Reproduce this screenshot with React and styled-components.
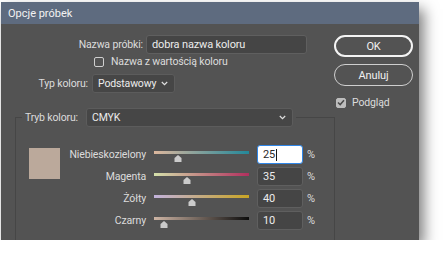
import React from "react";
import styled, { createGlobalStyle } from "styled-components";

const Global = createGlobalStyle`
  html, body { margin: 0; padding: 0; background: #ffffff; }
  body { font-family: Roboto, "Liberation Sans", sans-serif; }
`;

const Page = styled.div`
  padding: 2px 0 0 1px;
`;

const Dialog = styled.div`
  width: 418px;
  height: 238px;
  display: flex;
  flex-direction: column;
  background: #535353;
  box-shadow: 5px 7px 13px rgba(0, 0, 0, 0.5);
  overflow: hidden;
`;

const TitleBar = styled.div`
  height: 22px;
  flex: none;
  display: flex;
  align-items: center;
  padding-left: 7px;
  background: #5e6b7f;
  color: #f2f2f2;
  font-size: 11px;
`;

const Body = styled.div`
  flex: 1;
  display: grid;
  grid-template-columns: 333px 1fr;
  color: #dcdcdc;
  font-size: 10.5px;
  letter-spacing: -0.15px;
  line-height: 13px;
  overflow: hidden;
`;

const Main = styled.div`
  display: flex;
  flex-direction: column;
  padding-top: 11px;
`;

const Row = styled.div`
  display: flex;
  align-items: center;
  gap: ${(p) => p.$gap || 4}px;
  margin-top: ${(p) => p.$mt || 0}px;
  padding-left: ${(p) => p.$pl || 0}px;
`;

const Label = styled.label`
  width: ${(p) => p.$w}px;
  text-align: ${(p) => p.$align || "right"};
  white-space: nowrap;
  flex: none;
`;

const TextInput = styled.div`
  box-sizing: border-box;
  width: ${(p) => p.$w}px;
  height: 19px;
  display: flex;
  align-items: center;
  padding-left: 5px;
  background: ${(p) => (p.$focus ? "#ffffff" : "#454545")};
  border: 1px solid ${(p) => (p.$focus ? "#2f86e8" : "#5f5f5f")};
  border-radius: 3px;
  color: ${(p) => (p.$focus ? "#2a2a2a" : "#ececec")};
  font-size: 11px;
`;

const Caret = styled.span`
  display: inline-block;
  width: 1px;
  height: 12px;
  background: #1a1a1a;
  margin-left: 1px;
`;

const Check = styled.span`
  box-sizing: border-box;
  width: 10px;
  height: 10px;
  flex: none;
  border-radius: 2px;
  border: 1px solid ${(p) => (p.$checked ? "#bdbdbd" : "#cfcfcf")};
  background: ${(p) => (p.$checked ? "#bdbdbd" : "transparent")};
  display: flex;
  align-items: center;
  justify-content: center;
`;

const Select = styled.div`
  box-sizing: border-box;
  width: ${(p) => p.$w}px;
  height: 19px;
  display: flex;
  align-items: center;
  justify-content: space-between;
  padding: 0 6px 0 5px;
  background: #464646;
  border: 1px solid #5c5c5c;
  border-radius: 3px;
  color: #ececec;
  white-space: nowrap;
`;

const Chevron = () => (
  <svg width="7" height="5" viewBox="0 0 7 5">
    <path d="M0.8 1 L3.5 3.7 L6.2 1" fill="none" stroke="#e0e0e0" strokeWidth="1.2" />
  </svg>
);

const Group = styled.div`
  margin: 24px 0 0 14px;
  width: 320px;
  box-sizing: border-box;
  border: 1px solid #464646;
  border-bottom: none;
  flex: 1;
  display: flex;
  flex-direction: column;
`;

const Legend = styled.div`
  align-self: flex-start;
  display: flex;
  align-items: center;
  gap: 5px;
  margin: -10px 0 0 6px;
  padding: 0 3px;
  background: #535353;
`;

const GroupContent = styled.div`
  display: flex;
  align-items: flex-start;
  padding-top: 18px;
`;

const Swatch = styled.div`
  width: 31px;
  height: 31px;
  flex: none;
  margin: 3px 0 0 13px;
  background: ${(p) => p.$color};
`;

const Sliders = styled.div`
  display: grid;
  grid-template-columns: 86px 95px 46px auto;
  column-gap: 8px;
  row-gap: 3px;
  align-items: center;
`;

const SliderLabel = styled.span`
  text-align: right;
  white-space: nowrap;
`;

const Slider = styled.div`
  position: relative;
  height: 19px;
`;

const Track = styled.div`
  position: absolute;
  left: 0;
  right: 0;
  top: 6px;
  height: 3px;
  background: linear-gradient(to right, ${(p) => p.$from}, ${(p) => p.$to});
`;

const Thumb = styled.svg`
  position: absolute;
  top: 10px;
  margin-left: -4px;
`;

const Percent = styled.span`
  margin-left: -4px;
  color: #dcdcdc;
  font-size: 11px;
`;

const Side = styled.div`
  display: flex;
  flex-direction: column;
  align-items: flex-start;
  padding-top: 11px;
`;

const Button = styled.div`
  box-sizing: border-box;
  width: 79px;
  height: 22px;
  display: flex;
  align-items: center;
  justify-content: center;
  border-radius: 11px;
  border: ${(p) => (p.$primary ? "2px solid #f4f4f4" : "1px solid #cfcfcf")};
  color: #f0f0f0;
  font-size: 11px;
  margin-bottom: 7px;
`;

const Preview = styled.div`
  display: flex;
  align-items: center;
  gap: 6px;
  margin: 3px 0 0 2px;
`;

const channels = [
  { name: "Niebieskozielony", value: 25, from: "#dcb79d", to: "#23889a", focus: true },
  { name: "Magenta", value: 35, from: "#d4e0aa", to: "#b12f5e" },
  { name: "Żółty", value: 40, from: "#c2b2dc", to: "#c9a524" },
  { name: "Czarny", value: 10, from: "#cdb4a4", to: "#0c0c0c" },
];

export default function App() {
  return (
    <>
      <Global />
      <Page>
        <Dialog>
          <TitleBar>Opcje próbek</TitleBar>
          <Body>
            <Main>
              <Row $gap={3}>
                <Label $w={142}>Nazwa próbki:</Label>
                <TextInput $w={161}>dobra nazwa koloru</TextInput>
              </Row>
              <Row $mt={1} $pl={93} $gap={7}>
                <Check />
                <span>Nazwa z wartością koloru</span>
              </Row>
              <Row $mt={6} $gap={4}>
                <Label $w={87}>Typ koloru:</Label>
                <Select $w={83}>
                  Podstawowy
                  <Chevron />
                </Select>
              </Row>
              <Group>
                <Legend>
                  <Label $w={56} $align="left">Tryb koloru:</Label>
                  <Select $w={207}>
                    CMYK
                    <Chevron />
                  </Select>
                </Legend>
                <GroupContent>
                  <Swatch $color="#bba99b" />
                  <Sliders>
                    {channels.map((c) => (
                      <React.Fragment key={c.name}>
                        <SliderLabel>{c.name}</SliderLabel>
                        <Slider>
                          <Track $from={c.from} $to={c.to} />
                          <Thumb
                            width="8"
                            height="7"
                            viewBox="0 0 8 7"
                            style={{ left: `${c.value}%` }}
                          >
                            <path d="M0.5 7 L0.5 3 L4 0 L7.5 3 L7.5 7 Z" fill="#cbcbcb" />
                          </Thumb>
                        </Slider>
                        <TextInput $w={46} $focus={c.focus}>
                          {c.value}
                          {c.focus && <Caret />}
                        </TextInput>
                        <Percent>%</Percent>
                      </React.Fragment>
                    ))}
                  </Sliders>
                </GroupContent>
              </Group>
            </Main>
            <Side>
              <Button $primary>OK</Button>
              <Button>Anuluj</Button>
              <Preview>
                <Check $checked>
                  <svg width="8" height="7" viewBox="0 0 8 7">
                    <path d="M1 3.5 L3.2 5.6 L7 1.2" fill="none" stroke="#4a4a4a" strokeWidth="1.5" />
                  </svg>
                </Check>
                <span>Podgląd</span>
              </Preview>
            </Side>
          </Body>
        </Dialog>
      </Page>
    </>
  );
}
